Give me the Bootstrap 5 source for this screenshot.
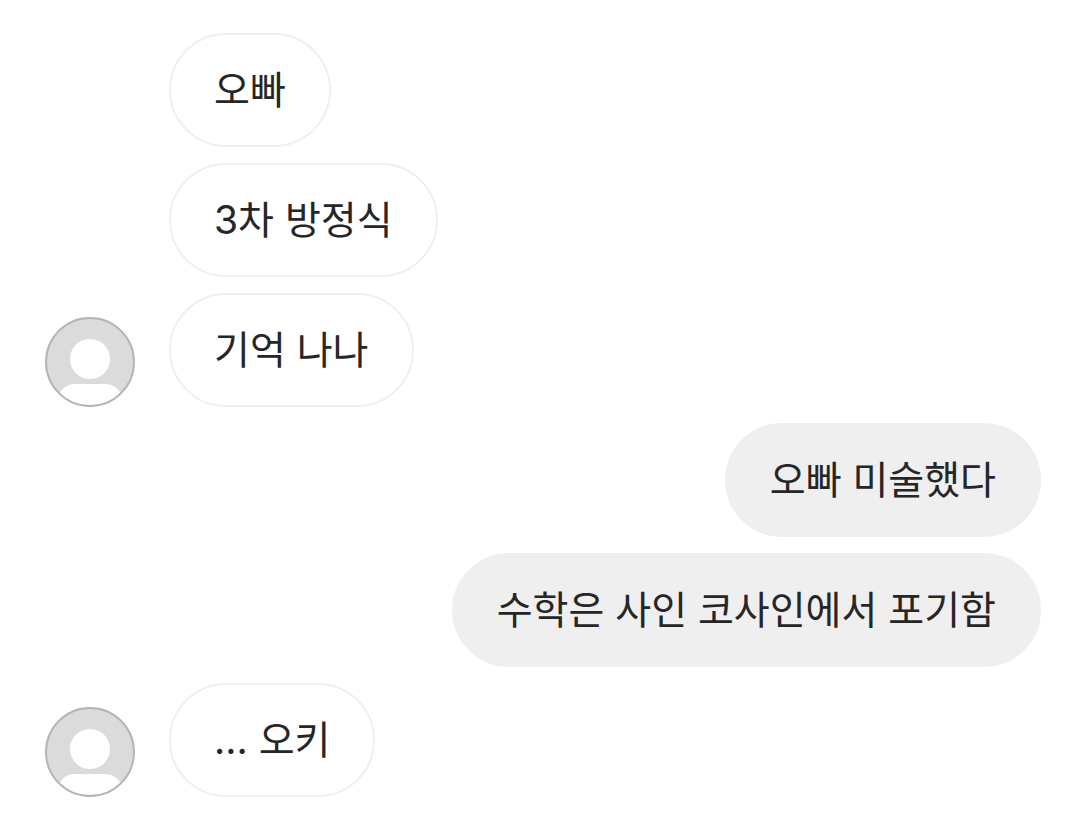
<!DOCTYPE html>
<html lang="ko">
<head>
<meta charset="utf-8">
<meta name="viewport" content="width=device-width, initial-scale=1">
<title>대화</title>
<link href="https://cdn.jsdelivr.net/npm/bootstrap@5.3.0/dist/css/bootstrap.min.css" rel="stylesheet">
<style>
body { background: #fff; color: #262626; font-family: Inter, "Noto Sans CJK KR", sans-serif; font-size: 39px; line-height: 58px; }
.chat { gap: 16px; padding: 33px 38px 22px 45px; }
.message { gap: 34px; }
.avatar { width: 90px; height: 90px; }
.bubble { border: 2px solid #efefef; border-radius: 57px; padding: 26px 43px; }
.bubble-in { background: #fff; }
.bubble-out { background: #efefef; }
</style>
</head>
<body>
<main class="chat d-flex flex-column">
  <div class="message d-flex align-items-end"><div class="avatar flex-shrink-0"></div><div class="bubble bubble-in">오빠</div></div>
  <div class="message d-flex align-items-end"><div class="avatar flex-shrink-0"></div><div class="bubble bubble-in">3차 방정식</div></div>
  <div class="message d-flex align-items-end">
    <svg class="avatar flex-shrink-0" viewBox="0 0 90 90" role="img" aria-label="프로필"><defs><clipPath id="face"><circle cx="45" cy="45" r="44"/></clipPath></defs><circle cx="45" cy="45" r="44" fill="#dbdbdb"/><g clip-path="url(#face)" fill="#fff"><circle cx="45" cy="42" r="20"/><path d="M13 79C17 71 22 67 30 67H60C68 67 73 71 77 79V90H13Z"/></g><circle cx="45" cy="45" r="44" fill="none" stroke="#b5b5b5" stroke-width="2"/></svg>
    <div class="bubble bubble-in">기억 나나</div></div>
  <div class="message d-flex justify-content-end"><div class="bubble bubble-out">오빠 미술했다</div></div>
  <div class="message d-flex justify-content-end"><div class="bubble bubble-out">수학은 사인 코사인에서 포기함</div></div>
  <div class="message d-flex align-items-end">
    <svg class="avatar flex-shrink-0" viewBox="0 0 90 90" role="img" aria-label="프로필"><circle cx="45" cy="45" r="44" fill="#dbdbdb"/><g clip-path="url(#face)" fill="#fff"><circle cx="45" cy="42" r="20"/><path d="M13 79C17 71 22 67 30 67H60C68 67 73 71 77 79V90H13Z"/></g><circle cx="45" cy="45" r="44" fill="none" stroke="#b5b5b5" stroke-width="2"/></svg>
    <div class="bubble bubble-in">... 오키</div></div>
</main>
<script src="https://cdn.jsdelivr.net/npm/bootstrap@5.3.0/dist/js/bootstrap.bundle.min.js"></script>
</body>
</html>
